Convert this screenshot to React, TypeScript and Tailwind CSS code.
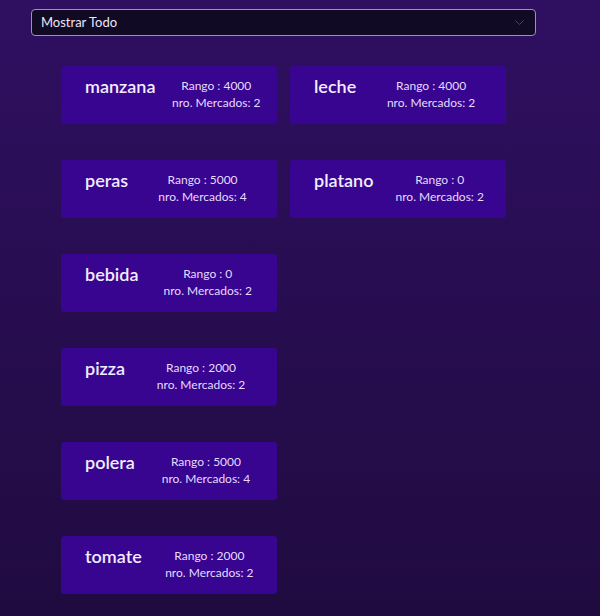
import React from 'react';

type Producto = { nombre: string; rango: number; mercados: number };

const filas: Producto[][] = [
  [
    { nombre: 'manzana', rango: 4000, mercados: 2 },
    { nombre: 'leche', rango: 4000, mercados: 2 },
  ],
  [
    { nombre: 'peras', rango: 5000, mercados: 4 },
    { nombre: 'platano', rango: 0, mercados: 2 },
  ],
  [{ nombre: 'bebida', rango: 0, mercados: 2 }],
  [{ nombre: 'pizza', rango: 2000, mercados: 2 }],
  [{ nombre: 'polera', rango: 5000, mercados: 4 }],
  [{ nombre: 'tomate', rango: 2000, mercados: 2 }],
];

const Card: React.FC<{ p: Producto }> = ({ p }) => (
  <div className="w-[216px] h-[58px] bg-[#37058f] rounded-[3px] flex items-start pl-6">
    <span className="pt-[8px] text-[18px] leading-[24px] font-semibold text-[#f3ecff]">{p.nombre}</span>
    <div className="mx-auto pt-[11px] flex flex-col items-center text-[12px] leading-[17px] text-[#e6dbff]">
      <span>Rango : {p.rango}</span>
      <span>nro. Mercados: {p.mercados}</span>
    </div>
  </div>
);

export default function App() {
  return (
    <div className="w-[600px] h-[616px] bg-gradient-to-b from-[#2f0f61] to-[#200b40] font-['Lato','Noto_Sans',sans-serif] pt-[9px]">
      <div className="ml-[31px] w-[505px] h-[27px] rounded-[4px] border border-[#a08ccb] bg-[#110a24] flex items-center justify-between px-[9px]">
        <span className="text-[13px] text-[#ece6f7]">Mostrar Todo</span>
        <svg width="9" height="5" viewBox="0 0 9 5" className="mr-[2px]">
          <path d="M0.5 0.5l4 4 4-4" fill="none" stroke="#4f416e" strokeWidth="1" />
        </svg>
      </div>
      <div className="mt-[30px] ml-[61px] flex flex-col gap-[36px]">
        {filas.map((fila, i) => (
          <div key={i} className="flex gap-[13px]">
            {fila.map((p) => (
              <Card key={p.nombre} p={p} />
            ))}
          </div>
        ))}
      </div>
    </div>
  );
}
